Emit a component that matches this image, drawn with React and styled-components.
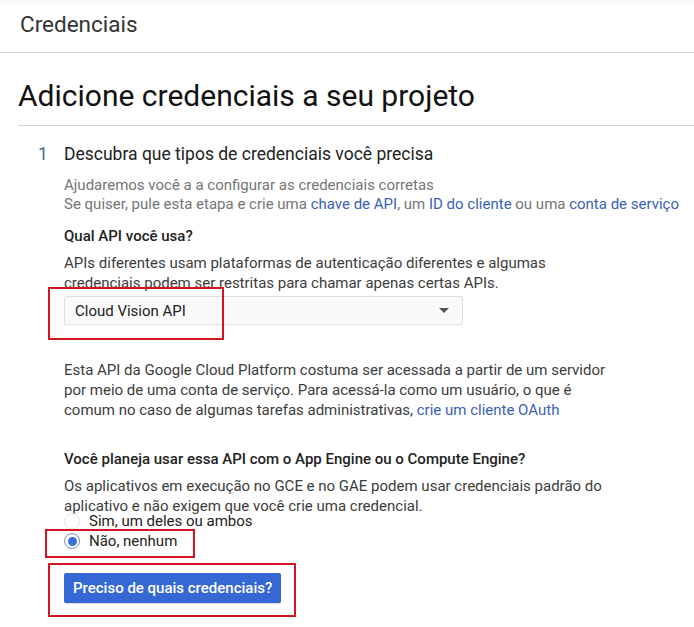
import React from "react";
import styled, { createGlobalStyle } from "styled-components";

const GlobalStyle = createGlobalStyle`
  html, body {
    margin: 0;
    padding: 0;
    background: #fff;
    font-family: Roboto, "Liberation Sans", Arial, sans-serif;
    color: #212121;
  }
`;

const Page = styled.div`
  position: relative;
  width: 694px;
  height: 627px;
  overflow: hidden;
  background: #fff;
`;

const Header = styled.div`
  height: 53px;
  box-sizing: border-box;
  padding: 12px 0 0 20px;
  border-bottom: 1px solid #d4d4d4;
  box-shadow: inset 0 6px 6px -6px rgba(0, 0, 0, 0.08);
  font-size: 22.5px;
  line-height: 24px;
  color: #333;
`;

const Title = styled.h1`
  margin: 23px 0 0 18px;
  padding-bottom: 9px;
  font-size: 30px;
  font-weight: 400;
  line-height: 40px;
  color: #111;
  border-bottom: 1px solid #d4d4d4;
`;

const Step = styled.div`
  display: grid;
  grid-template-columns: 26px 1fr;
  padding: 16px 0 0 38px;
`;

const StepNumber = styled.div`
  font-size: 17.5px;
  line-height: 24px;
  color: #4a6d9a;
`;

const StepTitle = styled.div`
  font-size: 17.5px;
  line-height: 24px;
  color: #222;
`;

const StepBody = styled.div`
  grid-column: 2;
  font-size: 15px;
  line-height: 20px;
`;

const Muted = styled.p`
  margin: 10px 0 0;
  color: #757575;
  line-height: 19px;
  white-space: nowrap;
`;

const Link = styled.a`
  color: #3b5fb4;
  text-decoration: none;
`;

const Question = styled.div`
  margin-top: ${(p) => p.$top}px;
  font-size: 15px;
  font-weight: 500;
  color: #222;
`;

const Text = styled.p`
  margin: ${(p) => p.$top}px 0 0;
  color: #3c3c3c;
  white-space: nowrap;
`;

const Select = styled.div`
  margin-top: 3px;
  width: 399px;
  height: 29px;
  box-sizing: border-box;
  border: 1px solid #e0e0e0;
  border-radius: 2px;
  background: #fafafa;
  display: flex;
  align-items: center;
  justify-content: space-between;
  padding: 0 10px;
  font-size: 15px;
  color: #222;
`;

const Caret = styled.span`
  width: 0;
  height: 0;
  border-left: 5px solid transparent;
  border-right: 5px solid transparent;
  border-top: 5px solid #555;
  margin-right: 3px;
`;

const RadioGroup = styled.div`
  margin-top: -5px;
`;

const RadioRow = styled.label`
  display: flex;
  align-items: center;
  gap: 9px;
  height: 20px;
  font-size: 15px;
  color: #222;
`;

const RadioCircle = styled.span`
  width: 16px;
  height: 16px;
  border-radius: 50%;
  box-sizing: border-box;
  border: 1px solid ${(p) => (p.$checked ? "#7a8fb8" : "#e6e6e6")};
  display: flex;
  align-items: center;
  justify-content: center;
  &::after {
    content: "";
    width: 9px;
    height: 9px;
    border-radius: 50%;
    background: ${(p) => (p.$checked ? "#3b6fd8" : "transparent")};
  }
`;

const Button = styled.button`
  margin-top: 22px;
  height: 30px;
  padding: 0 9px;
  border: none;
  border-radius: 2px;
  background: #3568d4;
  color: #fff;
  font-family: inherit;
  font-size: 15px;
  font-weight: 500;
  box-shadow: 0 1px 1px rgba(0, 0, 0, 0.15);
`;

const Annotation = styled.div`
  position: absolute;
  border: 2px solid #d41420;
  box-sizing: border-box;
  pointer-events: none;
`;

export default function App() {
  return (
    <>
      <GlobalStyle />
      <Page>
        <Header>Credenciais</Header>
        <Title>Adicione credenciais a seu projeto</Title>
        <Step>
          <StepNumber>1</StepNumber>
          <StepTitle>Descubra que tipos de credenciais você precisa</StepTitle>
          <StepBody>
            <Muted>
              Ajudaremos você a a configurar as credenciais corretas
              <br />
              Se quiser, pule esta etapa e crie uma <Link>chave de API</Link>, um{" "}
              <Link>ID do cliente</Link> ou uma <Link>conta de serviço</Link>
            </Muted>
            <Question $top={12}>Qual API você usa?</Question>
            <Text $top={7}>
              APIs diferentes usam plataformas de autenticação diferentes e algumas
              <br />
              credenciais podem ser restritas para chamar apenas certas APIs.
            </Text>
            <Select>
              Cloud Vision API
              <Caret />
            </Select>
            <Text $top={35}>
              Esta API da Google Cloud Platform costuma ser acessada a partir de um servidor
              <br />
              por meio de uma conta de serviço. Para acessá-la como um usuário, o que é
              <br />
              comum no caso de algumas tarefas administrativas,{" "}
              <Link>crie um cliente OAuth</Link>
            </Text>
            <Question $top={29}>
              Você planeja usar essa API com o App Engine ou o Compute Engine?
            </Question>
            <Text $top={7}>
              Os aplicativos em execução no GCE e no GAE podem usar credenciais padrão do
              <br />
              aplicativo e não exigem que você crie uma credencial.
            </Text>
            <RadioGroup>
              <RadioRow>
                <RadioCircle />
                Sim, um deles ou ambos
              </RadioRow>
              <RadioRow>
                <RadioCircle $checked />
                Não, nenhum
              </RadioRow>
            </RadioGroup>
            <Button>Preciso de quais credenciais?</Button>
          </StepBody>
        </Step>
        <Annotation style={{ left: 48, top: 287, width: 176, height: 53 }} />
        <Annotation style={{ left: 45, top: 529, width: 150, height: 29 }} />
        <Annotation style={{ left: 48, top: 563, width: 248, height: 54 }} />
      </Page>
    </>
  );
}
